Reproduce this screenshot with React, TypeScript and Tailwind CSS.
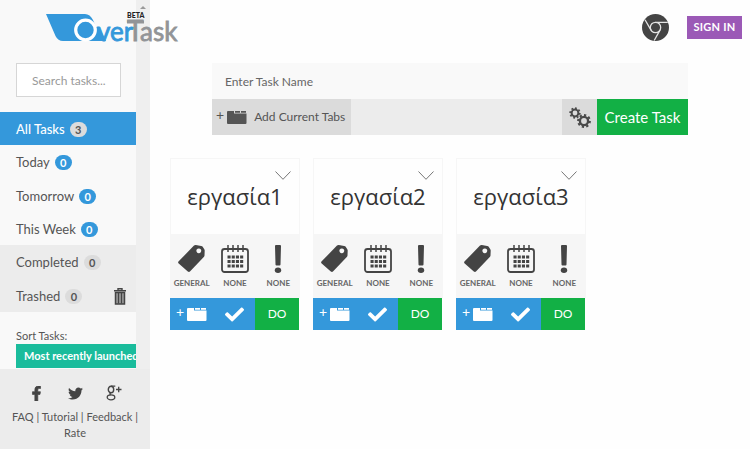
import React, { useState } from 'react';
import { FaCheck, FaFacebookF, FaTwitter } from 'react-icons/fa';

interface Filter {
  name: string;
  count: number;
  archived?: boolean;
}

interface Task {
  id: number;
  title: string;
}

const filters: Filter[] = [
  { name: 'All Tasks', count: 3 },
  { name: 'Today', count: 0 },
  { name: 'Tomorrow', count: 0 },
  { name: 'This Week', count: 0 },
  { name: 'Completed', count: 0, archived: true },
  { name: 'Trashed', count: 0, archived: true },
];

const tasks: Task[] = [
  { id: 1, title: 'εργασία1' },
  { id: 2, title: 'εργασία2' },
  { id: 3, title: 'εργασία3' },
];

function Logo() {
  return (
    <svg viewBox="0 0 134 34" className="w-[134px] h-[34px] overflow-visible" role="img" aria-label="OverTask">
      <path d="M0 4H39Q44 4 47 10L50 17H53L60 31H17Q12 31 9.500 26z" fill="#3498db" />
      <circle cx="39.500" cy="20" r="9.800" fill="#3498db" stroke="#fff" strokeWidth="3.200" />
      <g className="font-['Lato',sans-serif]" strokeWidth=".8">
        <text x="51" y="31" fontSize="26" fill="#3498db" stroke="#3498db">ver</text>
        <text x="94" y="31" fontSize="26" fill="#929497" stroke="#929497">ask</text>
        <text x="81" y="31" fontSize="28" fill="#929497" stroke="#929497">T</text>
      </g>
      <path d="M81 12h17" stroke="#929497" strokeWidth="3" />
      <text x="81" y="8" fontSize="7" fontWeight="900" fill="#222" className="font-['Lato',sans-serif]">BETA</text>
    </svg>
  );
}

function TrashIcon() {
  return (
    <svg viewBox="0 0 12 17" className="w-3 h-[17px]" fill="none" stroke="#444">
      <path d="M0 2.7h12M4 2V.7h4V2" strokeWidth="1.4" />
      <path d="M1.500 4.500h9V16h-9z" strokeWidth="1.500" fill="#999" />
      <path d="M4.500 5v10.500M7.500 5v10.500" strokeWidth="1.2" />
    </svg>
  );
}

function GooglePlusIcon() {
  return (
    <svg viewBox="0 0 16 16" className="w-4 h-4" fill="none" stroke="#444">
      <ellipse cx="5" cy="4.500" rx="2.700" ry="3.200" strokeWidth="1.400" />
      <path d="M5 1.200h4.300M5 7.700q-2.200 1.200-.2 2.200" strokeWidth="1.200" />
      <ellipse cx="5" cy="12.300" rx="3.800" ry="2.500" strokeWidth="1.300" />
      <path d="M10 4.500h5.500M12.700 1.800v5.500" strokeWidth="1.300" />
    </svg>
  );
}

function ChromeIcon() {
  return (
    <svg viewBox="0 0 27 27" className="w-[27px] h-[27px]">
      <circle cx="13.5" cy="13.5" r="13.5" fill="#444" />
      <g fill="none" stroke="#e4e4e4" strokeWidth="1.3">
        <circle cx="13.5" cy="13.5" r="5.2" />
        <path d="M13.500 8.300H25.800M18 16.100L12.200 26.500M9 16.100L3 5.700" />
      </g>
    </svg>
  );
}

function TabsIcon() {
  return (
    <svg viewBox="0 0 20 13" className="w-5 h-[13px]" fill="currentColor">
      <path d="M0 1Q0 0 1 0H7V2.500H19.500V12q0 1-1 1H1q-1 0-1-1z" />
      <path d="M8 0h5v1.800H8zM14 0h5v1.800h-5z" />
    </svg>
  );
}

function TagIcon() {
  return (
    <svg viewBox="0 0 27 28" className="w-[27px] h-7" fill="#444">
      <path
        fillRule="evenodd"
        d="M16 .6q.8-.6 1.800-.5l5.400.8q1 .1 1.500.9l1.600 2.400q.4.600.4 1.400l-.2 5q0 .9-.7 1.500L12.200 26.300q-1.200 1.100-2.400.1L.7 18.500q-1.200-1.100 0-2.200zM20.800 3.400a2.400 2.400 0 1 0 .01 0z"
      />
    </svg>
  );
}

function GearsIcon() {
  return (
    <svg viewBox="0 0 22 21" className="w-[22px] h-[21px]" fill="none" stroke="#4a4a4a">
      <circle cx="6" cy="6" r="3.4" strokeWidth="2" />
      <circle cx="6" cy="6" r="4.800" strokeWidth="1.800" pathLength="16" strokeDasharray="1 1" />
      <circle cx="15" cy="14" r="4.100" strokeWidth="2.400" />
      <circle cx="15" cy="14" r="5.900" strokeWidth="2" pathLength="16" strokeDasharray="1 1" />
    </svg>
  );
}

function CalendarIcon() {
  return (
    <svg viewBox="0 0 28 28" className="w-7 h-7" fill="none" stroke="#444">
      <rect x="1" y="4" width="26" height="23" rx="2.500" strokeWidth="1.800" />
      <path d="M7 0v7M12 0v7M17 0v7M22 0v7" strokeWidth="1.500" />
      <path d="M6.500 12h16M6.500 16.500h16M6.500 21h16" strokeWidth="3" strokeDasharray="3.100 1.100" />
    </svg>
  );
}

function PriorityIcon() {
  return (
    <svg viewBox="0 0 8 28" className="w-2 h-7" fill="#444">
      <path d="M1 1q0-1 1-1h4q1 0 1 1L6.500 19.500q0 1-1 1H2.500q-1 0-1-1z" />
      <ellipse cx="4" cy="25.200" rx="3.200" ry="2.800" />
    </svg>
  );
}

function TaskCard({ task }: { task: Task }) {
  return (
    <article className="w-[130px]">
      <div className="relative h-[77px] border border-[#f6f6f6] flex items-center justify-center">
        <h2 className="font-['Open_Sans','Noto_Sans',sans-serif] text-[22px] text-[#333]">{task.title}</h2>
        <button aria-label="Expand task" className="absolute top-3 right-2">
          <svg viewBox="0 0 16 9" className="w-4 h-[9px]" fill="none" stroke="#777">
            <path d="M.5.500L8 8.300 15.500.500" />
          </svg>
        </button>
      </div>
      <div className="h-[63px] bg-[#f6f6f6] grid grid-cols-3 pt-[10px] text-[8px] font-bold text-[#666]">
        <button className="flex flex-col items-center gap-1">
          <TagIcon />
          GENERAL
        </button>
        <button className="flex flex-col items-center gap-1">
          <CalendarIcon />
          NONE
        </button>
        <button className="flex flex-col items-center gap-1">
          <PriorityIcon />
          NONE
        </button>
      </div>
      <div className="h-8 mr-px flex text-white">
        <button aria-label="Add tabs" className="w-[43px] bg-[#3498db] flex items-center justify-center gap-[3px]">
          <span className="text-sm leading-4 pb-1">+</span>
          <TabsIcon />
        </button>
        <button aria-label="Complete" className="w-[42px] bg-[#3498db] flex items-center justify-center">
          <FaCheck className="size-[19px]" />
        </button>
        <button className="flex-1 bg-[#12b045] text-xs">DO</button>
      </div>
    </article>
  );
}

function Sidebar() {
  const [active, setActive] = useState('All Tasks');

  return (
    <aside className="relative w-[150px] shrink-0 h-screen flex flex-col bg-[#f9f9f9]">
      <div className="flex-1 min-h-0 flex">
        <div className="flex-1 min-w-0 overflow-hidden pt-[63px]">
          <input
            type="text"
            aria-label="Search tasks"
            placeholder="Search tasks..."
            className="block w-[105px] h-[34px] ml-4 pl-[15px] pr-2 border border-[#d6d6d6] bg-white text-xs placeholder:text-[#999]"
          />
          <nav className="h-[200px] mt-[15px] flex flex-col text-[13px] text-[#555]">
            {filters.map((filter) => {
              const isActive = filter.name === active;
              return (
                <div
                  key={filter.name}
                  className={`flex-1 flex items-center pt-[2px] pl-4 pr-[10px] ${
                    isActive ? 'bg-[#3498db] text-white' : filter.archived ? 'bg-[#ececec]' : ''
                  }`}
                >
                  <button className={`flex-1 flex items-center gap-[5px] ${isActive ? 'font-medium' : ''}`} onClick={() => setActive(filter.name)}>
                    {filter.name}
                    <span
                      className={`px-[5px] h-[15px] min-w-[17px] rounded-full text-[11px] leading-[15px] font-bold ${
                        isActive || filter.archived ? 'bg-[#dcdcdc] text-[#555]' : 'bg-[#3498db] text-white'
                      }`}
                    >
                      {filter.count}
                    </span>
                  </button>
                  {filter.name === 'Trashed' && (
                    <button aria-label="Empty trash">
                      <TrashIcon />
                    </button>
                  )}
                </div>
              );
            })}
          </nav>
          <label htmlFor="sort" className="block mt-4 ml-4 text-[11px] leading-4 text-[#555]">
            Sort Tasks:
          </label>
          <select id="sort" className="block appearance-none w-[140px] h-6 ml-4 px-2 bg-[#1abc9c] text-white text-[11px] font-bold">
            <option>Most recently launched</option>
            <option>Name</option>
          </select>
        </div>
        <div className="w-[14px] bg-[#efefef] flex justify-center pt-[6px]">
          <svg viewBox="0 0 6 3" className="w-[6px] h-[3px]" fill="#999">
            <path d="M0 3L3 0l3 3z" />
          </svg>
        </div>
      </div>
      <footer className="bg-[#ececec] h-20 pt-4 text-center text-[11px] leading-4 text-[#555]">
        <div className="flex items-center justify-between pl-7 pr-7 mb-2 text-[#444]">
          <a href="#facebook" aria-label="Facebook" className="w-4 flex justify-center">
            <FaFacebookF className="size-[15px] stroke-current stroke-[24px]" />
          </a>
          <a href="#twitter" aria-label="Twitter">
            <FaTwitter className="size-[15px]" />
          </a>
          <a href="#google" aria-label="Google Plus">
            <GooglePlusIcon />
          </a>
        </div>
        <a href="#faq">FAQ</a> | <a href="#tutorial">Tutorial</a> | <a href="#feedback">Feedback</a> | <a href="#rate">Rate</a>
      </footer>
      <a href="#home" className="absolute top-[10px] left-[46px]">
        <Logo />
      </a>
    </aside>
  );
}

function App() {
  const [name, setName] = useState('');

  return (
    <div className="min-h-screen flex bg-[#fefefe] font-['Lato',sans-serif]">
      <Sidebar />
      <main className="flex-1 min-w-0">
        <header className="flex items-center justify-end gap-[18px] pt-[14px] pr-2">
          <a href="#chrome" aria-label="Chrome extension">
            <ChromeIcon />
          </a>
          <button className="h-[23px] w-[55px] bg-[#9b59b6] text-white text-[11px] font-bold tracking-wide">SIGN IN</button>
        </header>

        <form className="mt-[22px] mx-[62px]" onSubmit={(e) => e.preventDefault()}>
          <input
            type="text"
            aria-label="Task name"
            placeholder="Enter Task Name"
            value={name}
            onChange={(e) => setName(e.target.value)}
            className="block w-full h-9 px-[13px] bg-[#f9f9f9] text-xs text-[#555] placeholder:text-[#666]"
          />
          <div className="flex h-9 bg-[#ececec]">
            <button type="button" className="w-[139px] bg-[#dbdbdb] text-[#555] text-xs flex items-center pl-1">
              <span className="text-sm leading-4 pb-1 mr-[3px]">+</span>
              <TabsIcon />
              <span className="ml-[7px]">Add Current Tabs</span>
            </button>
            <button type="button" aria-label="Settings" className="ml-auto w-[35px] bg-[#dbdbdb] flex items-center justify-center">
              <GearsIcon />
            </button>
            <button type="submit" className="w-[91px] bg-[#12b045] text-white text-[15px]">
              Create Task
            </button>
          </div>
        </form>

        <section className="mt-[23px] px-5 flex flex-wrap gap-[13px]">
          {tasks.map((task) => (
            <TaskCard key={task.id} task={task} />
          ))}
        </section>
      </main>
    </div>
  );
}

export default App;
